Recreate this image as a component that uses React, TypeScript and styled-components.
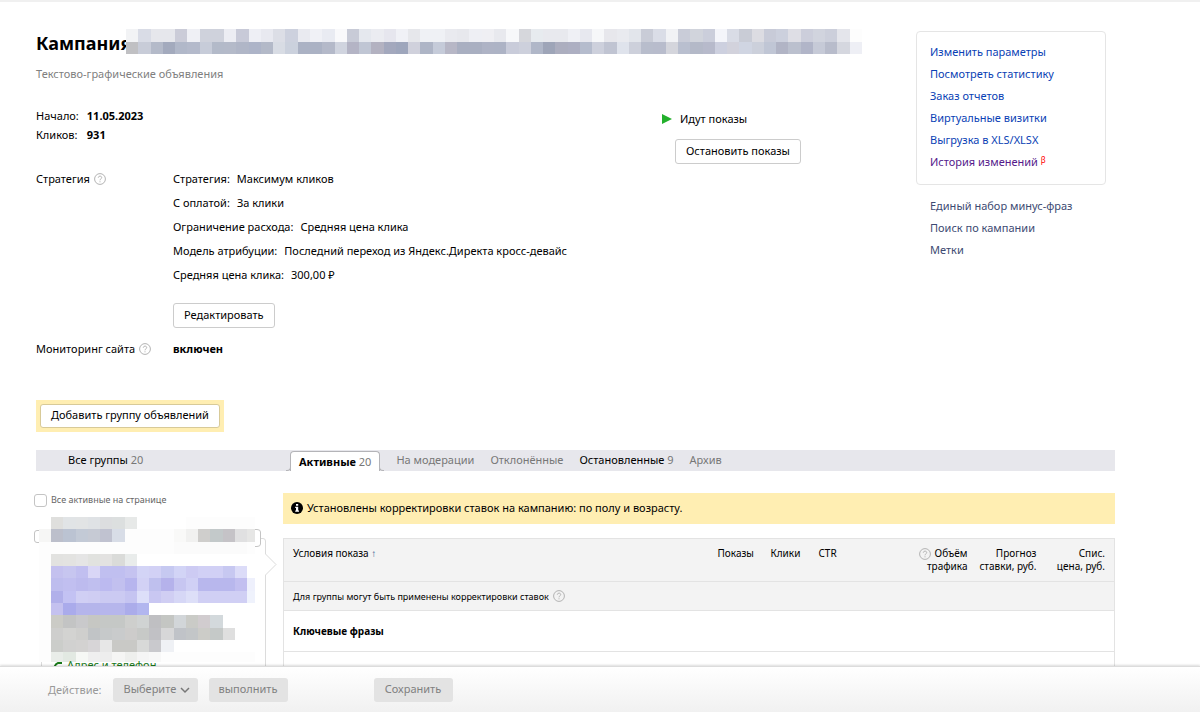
import React from 'react';
import styled, { createGlobalStyle } from 'styled-components';

const GlobalStyle = createGlobalStyle`
  *, *::before, *::after { box-sizing: border-box; }
  body {
    margin: 0;
    background: #fff;
    color: #000;
    font: 11px/18px 'Noto Sans', 'Open Sans', sans-serif;
  }
  button, input, select { font: inherit; }
  a { text-decoration: none; }
  a:hover { text-decoration: underline; }
`;

/* ---------- page frame ---------- */

const Page = styled.div`
  display: flex;
  flex-direction: column;
  height: 100vh;
  border-top: 2px solid #f0f0f0;
`;

const Scroller = styled.main`
  flex: 1;
  min-height: 0;
  overflow-y: auto;
  scrollbar-width: none;
  padding: 27px 85px 0 36px;
`;

const Overview = styled.div`
  display: grid;
  grid-template-columns: 1fr 199px;
`;

/* ---------- heading ---------- */

const TitleRow = styled.div`
  display: flex;
  height: 25px;
`;

const Title = styled.h1`
  flex: none;
  width: 90px;
  margin: 0;
  font-size: 18px;
  line-height: 28px;
  font-weight: 700;
  white-space: nowrap;
`;

const TitleMosaic = styled.svg`
  position: relative;
  display: block;
  flex: none;
  width: 736px;
  height: 25px;
`;

const Subtitle = styled.p`
  margin: 11px 0 0;
  color: #808080;
`;

/* ---------- summary ---------- */

const Facts = styled.div`
  display: flex;
  justify-content: space-between;
  margin-top: 24px;
`;

const FactList = styled.dl`
  display: grid;
  grid-template-columns: auto auto;
  align-content: start;
  gap: 1px 8px;
  margin: 0;
`;

const Term = styled.dt``;

const Value = styled.dd`
  margin: 0;
`;

const StrongValue = styled(Value)`
  font-weight: 700;
`;

const Status = styled.div`
  width: 254px;
  padding-top: 3px;
`;

const StatusLine = styled.div`
  display: flex;
  align-items: center;
  gap: 8px;
  margin-bottom: 11px;
`;

const StatusAction = styled.div`
  padding-left: 13px;
`;

const Button = styled.button`
  height: 25px;
  padding: 0 10px 2px;
  border: 1px solid #ccc;
  border-radius: 3px;
  background: #fff;
  color: #000;
  line-height: 18px;
  white-space: nowrap;
  cursor: pointer;
`;

const Section = styled.section<{ $top: number }>`
  display: grid;
  grid-template-columns: 137px 1fr;
  margin-top: ${p => p.$top}px;
`;

const SectionName = styled.div`
  display: flex;
  align-items: center;
  gap: 4px;
  height: 18px;
`;

const Params = styled.dl`
  display: flex;
  flex-direction: column;
  gap: 6px;
  margin: 0 0 19px;
`;

const Param = styled.div`
  display: flex;
  gap: 7px;
`;

/* ---------- side menu ---------- */

const Side = styled.nav`
  padding-top: 2px;
`;

const Links = styled.ul<{ $boxed?: boolean }>`
  display: flex;
  flex-direction: column;
  gap: 4px;
  width: 190px;
  margin: 0;
  padding: ${p => (p.$boxed ? '11px 13px 13px' : '12px 14px')};
  border: ${p => (p.$boxed ? '1px solid #e5e5e5' : '0')};
  border-radius: 4px;
  list-style: none;
`;

const Link = styled.a<{ $tone: 'blue' | 'visited' | 'slate' }>`
  color: ${p => ({ blue: '#0a3fb5', visited: '#551a8b', slate: '#3d4a72' })[p.$tone]};
`;

const Beta = styled.sup`
  color: #f00;
  font-size: 8px;
  line-height: 0;
  vertical-align: 3px;
`;

/* ---------- groups ---------- */

const AddGroup = styled.div`
  width: max-content;
  margin-top: 42px;
  padding: 4px;
  background: #ffeeb2;
  line-height: 0;
`;

const AddButton = styled(Button)`
  height: 24px;
  border-color: #d8ca98;
`;

const Tabs = styled.div`
  display: flex;
  height: 21px;
  margin-top: 18px;
  padding-left: 32px;
  background: #e7e7ec;
`;

const Tab = styled.button<{ $active?: boolean; $strong?: boolean }>`
  position: relative;
  height: ${p => (p.$active ? 20 : 21)}px;
  margin-top: ${p => (p.$active ? 1 : 0)}px;
  padding: ${p => (p.$active ? '0 8px' : '0 0 2px')};
  border: ${p => (p.$active ? '1px solid #b4b4b8' : '0')};
  border-bottom: 0;
  border-radius: ${p => (p.$active ? '4px 4px 0 0' : '0')};
  background: ${p => (p.$active ? '#fff' : 'none')};
  color: ${p => (p.$active || p.$strong ? '#000' : '#777')};
  font-weight: ${p => (p.$active ? 700 : 400)};
  white-space: nowrap;
  cursor: pointer;

  &::before,
  &::after {
    content: ${p => (p.$active ? "''" : 'none')};
    position: absolute;
    bottom: 0;
    width: 5px;
    height: 5px;
    border-bottom: 1px solid #b4b4b8;
    background: #e7e7ec;
  }
  &::before {
    right: 100%;
    border-right: 1px solid #b4b4b8;
    border-bottom-right-radius: 4px;
  }
  &::after {
    left: 100%;
    border-left: 1px solid #b4b4b8;
    border-bottom-left-radius: 4px;
  }
`;

const AllTab = styled.div`
  display: flex;
  width: 222px;
`;

const TabSet = styled.div`
  display: flex;
  gap: 16px;
`;

const Count = styled.span`
  color: #777;
  font-weight: 400;
`;

const Groups = styled.div`
  display: flex;
  margin-top: 22px;
`;

const GroupColumn = styled.div`
  flex: none;
  width: 249px;
  margin-left: -2px;
`;

const CheckLabel = styled.label`
  display: flex;
  align-items: center;
  gap: 4px;
  height: 14px;
  color: #666;
  font-size: 9px;
`;

const Check = styled.input`
  appearance: none;
  flex: none;
  width: 13px;
  height: 13px;
  margin: 0;
  border: 1px solid #c4c4c4;
  border-radius: 3px;
  background: #fff;
`;

const Preview = styled.div`
  position: relative;
  height: 157px;
  margin-top: 10px;
  padding: 140px 0 0 19px;
`;

const GroupCheck = styled(Check)`
  position: absolute;
  left: 0;
  top: 13px;
`;

const PreviewArt = styled.svg`
  position: absolute;
  left: 0;
  top: 0;
`;

const ContactLink = styled.a`
  position: relative;
  display: flex;
  align-items: center;
  gap: 5px;
  height: 16px;
  color: #1a7a1a;
  line-height: 16px;
`;

const Details = styled.div`
  flex: 1;
  min-width: 0;
`;

const Notice = styled.p`
  display: flex;
  align-items: center;
  gap: 4px;
  height: 31px;
  margin: 0 0 14px;
  padding: 0 8px 2px;
  background: #ffeeb2;
`;

const Table = styled.table`
  width: 100%;
  table-layout: fixed;
  border: 1px solid #e3e3e3;
  border-collapse: collapse;
  font-size: 10px;
  line-height: 13px;
`;

const Th = styled.th<{ $right?: boolean }>`
  height: 43px;
  padding: ${p => (p.$right ? '8px 9px 8px 0' : '8px 9px')};
  background: #f3f3f3;
  font-weight: 400;
  text-align: ${p => (p.$right ? 'right' : 'left')};
  vertical-align: top;
  white-space: nowrap;
`;

const Wide = styled.td<{ $height: number; $shade?: boolean; $strong?: boolean; $small?: boolean }>`
  height: ${p => p.$height}px;
  padding: 0 9px;
  border-top: 1px solid #e3e3e3;
  background: ${p => (p.$shade ? '#f3f3f3' : '#fff')};
  font-size: ${p => (p.$small ? 9 : 10)}px;
  font-weight: ${p => (p.$strong ? 700 : 400)};
`;

const Inline = styled.span`
  display: inline-flex;
  align-items: center;
  gap: 4px;
  height: 13px;
  vertical-align: top;
`;

const SortMark = styled.span`
  color: #33558c;
  font-weight: 700;
`;

/* ---------- action bar ---------- */

const ActionBar = styled.footer`
  position: relative;
  display: flex;
  align-items: center;
  flex: none;
  height: 46px;
  padding: 0 48px;
  border-top: 1px solid #dcdcdc;
  background: linear-gradient(#fff, #f1f1f1);
  box-shadow: 0 -1px 2px rgba(0, 0, 0, 0.14);
`;

const ActionLabel = styled.label`
  margin-right: 11px;
  color: #999;
`;

const SelectBox = styled.span`
  position: relative;
  margin-right: 11px;
`;

const Select = styled.select`
  appearance: none;
  display: block;
  width: 85px;
  height: 24px;
  padding: 0 11px 1px;
  border: 0;
  border-radius: 3px;
  background: #e3e3e3;
  color: #808080;
`;

const Chevron = styled.svg`
  position: absolute;
  right: 8px;
  top: 8px;
  pointer-events: none;
`;

const GreyButton = styled.button<{ $apart?: boolean }>`
  width: 79px;
  height: 24px;
  margin-left: ${p => (p.$apart ? 86 : 0)}px;
  padding: 0 0 1px;
  border: 0;
  border-radius: 3px;
  background: #e3e3e3;
  color: #808080;
`;

/* ---------- drawings ---------- */

function Help() {
  return (
    <svg width="12" height="12" viewBox="0 0 12 12" fill="none" stroke="#b3b3b3" aria-label="Справка">
      <circle cx="6" cy="6" r="5.4" />
      <path d="M4.3 4.7C4.3 2.6 7.7 2.6 7.7 4.6C7.7 5.9 6 5.8 6 7.3M6 8.3V9.3" />
    </svg>
  );
}

function Play() {
  return (
    <svg width="10" height="10" viewBox="0 0 10 10" aria-hidden="true">
      <path d="M0 0L10 5L0 10Z" fill="#23b02c" />
    </svg>
  );
}

function Info() {
  return (
    <svg width="12" height="12" viewBox="0 0 12 12" aria-hidden="true">
      <circle cx="6" cy="6" r="6" />
      <path d="M5 2H7.2V3.8H5ZM4.2 4.8H7.2V8.6H8V9.8H4.2V8.6H5V6H4.2Z" fill="#fff" />
    </svg>
  );
}

function Phone() {
  return (
    <svg width="9" height="9" viewBox="0 0 9 9" fill="none" stroke="#1a7a1a" strokeWidth="2" aria-hidden="true">
      <path d="M9 2H5Q1.500 3 1 9" />
    </svg>
  );
}

const titleTop =
  'f2f3f5 d9dce6 e6e7ec e6e7ec cbccd8 eff0f5 cfd2dc cfd2dc ecedf3 c8cad8 eeeff5 e8e9f0 dcdee6 cdd1de e9eaf0 f0f1f6 e9ebf2 f9f9fb c8cbd7 e5e8ee ebecf1 e6e6ee f0f1f6 e6e7eb eff1f5 eff1f5 e9eaef e7e8ed eeeff4 efeff3 e8e9ee f7f8fa d6d7dc e7ebef e8e9ee e8e9ee eff0f5 e7e8ef f6f7f9 e7e7ec e9eaef e2e5eb c9ccd7 dadde7 f1f2f5 c9ccd8 d1d4dc cbcedb f4f5fa d9dce6 c9ccd6 dcdce2 c8cbd8 ccd0dd dedee5 cccedb d1d4de cccfdb e4e5eb fdfdfd';
const titleBottom =
  'c0c0c3 c8ccd8 b4bac9 a3aabd b1b8c9 b4bacb c7ccd9 b3bac9 b4bac9 b0b6c7 adb4c8 b3b9c8 d8dce4 cbd1dd abb2c4 abb2c4 b4b9c9 d0d4df b4b4c5 c0c6d4 b3b2c1 a3a8bd 9ea6bc d0d1dc aeb5c6 c5cbd9 b7b7c6 a9afc1 a9afc1 aeb3c5 adb3c5 c9ccda cdd0dc b0b7c8 9ea5b8 acaebf adafc2 b5bccd cdd0dc c0c4d2 dfe3ec cdd0db b8bdcc b8bccc d4d5dc b9bfcf b4b9c8 b7bacb cdd0df d2d2dc d0d5e2 ccd0db c0c6d5 b1b4c5 bbc0ce b1b5c8 c6cad7 b8bccb d5d7df eeeff5';

const previewRows = [
  '- dfdfdd e1e4e6 e2e4e5 dfe2e5 dcdddf dcdfdf e7e9e8 - - - - fdfdfd fdfdfd fdfdfd fdfdfd fdfdfd fdfdfd',
  'f6f6f5 bcbfcb bbc3d2 c3cad6 c6cad4 c0c2d0 d8dde7 fdfdfd fdfdfd fdfdfd fdfdfd f9f9f8 f1f1f0 cfcecc c3c9ca c5c3c7 e0e0e1 e6e6e5',
  'fdfdfd fdfdfd fdfdfd fdfdfd fdfdfd fdfdfd fdfdfd fdfdfd fdfdfd fdfdfd fdfdfd fbfbfb fbfbfb fbfbfb fbfbfb fbfbfb fbfbfb fdfdfd',
  'fdfdfd e2e2e0 e3e3e1 e5e5e5 e1e2df e3e2e1 dadbd9 e9eceb',
  'fdfdfd c4c1ef c7c6f0 c1bff0 d9d6f6 c0bff0 c0bff0 c5c3f0 d3d4f6 d2d1f5 c6c9f1 d2d4f6 cdcbf3 d1d0f5 d1d0f5 c7c8f1 dcdcf8 -',
  'fdfdfd bebdee c1bff0 bdbbee c0bfef bcbaf0 c2c0ef b7b5ee d2d1f5 bfc0ee b5b2eb c7c6f1 d0d0f5 b8b7ed b8b7ed b8b7ed c2bff0 eef0fc',
  'fdfdfd b1b0ea c3c2f3 d0cff4 cfcdf3 cbcaf2 cbcaf2 c5c4f1 dddff9 c9c7f2 d0cef3 d6d7f6 dddff8 d0cff4 d0cff4 d0cff4 d0cff4 eff2fc',
  'fdfdfd c4c1ef aaabeb b5b5eb b5b5eb b6b6ec b6b6ec abacea b2b6ef',
  'fdfdfd cbcbc6 c3c4c4 c9c9cb c6c7c3 c5c8c6 c5c8c6 cecfcd d0d3d3 bfbfc2 c4c6c3 d2d6d9 cacbc7 d1cccf d3d9dc',
  'fdfdfd cececd d3d3d1 cfcfcd c1c4c6 c6c9ca c9cbcc cdcccb c7c9c7 c1c1c5 d7d7d8 c0c3c8 c3c6c8 ccccc8 c5c9c8 dfdfdf',
  'fdfdfd cbcdca d1d1d0 d3d2d1 d7d5d7 e7e7e7 c9c9c6 c9c9c6 d8d9d8 c9c9cd eff1f5',
  'fdfdfd e9ede9 e2e9e2 f6f8f5 efefef ededed f5f5f4 eeefed f5f5f5 f8f8f8 fdfdfd fdfdfd fdfdfd fdfdfd fdfdfd fdfdfd fdfdfd fdfdfd',
];

function Cells({ rows }: { rows: string[] }) {
  return (
    <g shapeRendering="crispEdges">
      {rows.flatMap((row, y) =>
        row.split(' ').map((c, x) =>
          c === '-' ? null : <rect key={`${x}-${y}`} x={x} y={y} width="1" height="1" fill={`#${c}`} />,
        ),
      )}
    </g>
  );
}

function GroupPreview() {
  return (
    <Preview>
      <GroupCheck type="checkbox" aria-label="Выбрать группу" />
      <PreviewArt width="249" height="157" viewBox="0 0 249 157" fill="none" aria-hidden="true">
        <path d="M220 12.500H223Q226.500 12.500 226.500 15V27Q226.500 29.500 223 29.500H220" stroke="#c4c4c4" />
        <path d="M227 21.500H229Q231.500 21.500 231.500 24V37L242 47.500L231.500 58V157M7.500 145V157" stroke="#dcdcdc" />
        <svg x="5" y="0" width="216" height="145" viewBox="0 0 17.640 11.800" preserveAspectRatio="none">
          <Cells rows={previewRows} />
        </svg>
      </PreviewArt>
      <ContactLink href="#contacts">
        <Phone />
        Адрес и телефон
      </ContactLink>
    </Preview>
  );
}

/* ---------- data ---------- */

const params = [
  ['Стратегия:', 'Максимум кликов'],
  ['С оплатой:', 'За клики'],
  ['Ограничение расхода:', 'Средняя цена клика'],
  ['Модель атрибуции:', 'Последний переход из Яндекс.Директа кросс-девайс'],
  ['Средняя цена клика:', '300,00 ₽'],
];

const actions = [
  'Изменить параметры',
  'Посмотреть статистику',
  'Заказ отчетов',
  'Виртуальные визитки',
  'Выгрузка в XLS/XLSX',
];

const tools = ['Единый набор минус-фраз', 'Поиск по кампании', 'Метки'];

export default function App() {
  return (
    <>
      <GlobalStyle />
      <Page>
        <Scroller>
          <Overview>
            <div>
              <TitleRow>
                <Title>Кампания</Title>
                <TitleMosaic viewBox="0 0 60 2" preserveAspectRatio="none" aria-hidden="true">
                  <Cells rows={[titleTop, titleBottom]} />
                </TitleMosaic>
              </TitleRow>
              <Subtitle>Текстово-графические объявления</Subtitle>

              <Facts>
                <FactList>
                  <Term>Начало:</Term>
                  <StrongValue>11.05.2023</StrongValue>
                  <Term>Кликов:</Term>
                  <StrongValue>931</StrongValue>
                </FactList>
                <Status>
                  <StatusLine>
                    <Play />
                    Идут показы
                  </StatusLine>
                  <StatusAction>
                    <Button type="button">Остановить показы</Button>
                  </StatusAction>
                </Status>
              </Facts>

              <Section $top={6}>
                <SectionName>
                  Стратегия <Help />
                </SectionName>
                <div>
                  <Params>
                    {params.map(([name, value]) => (
                      <Param key={name}>
                        <Term>{name}</Term>
                        <Value>{value}</Value>
                      </Param>
                    ))}
                  </Params>
                  <Button type="button">Редактировать</Button>
                </div>
              </Section>

              <Section $top={12}>
                <SectionName>
                  Мониторинг сайта <Help />
                </SectionName>
                <b>включен</b>
              </Section>
            </div>

            <Side>
              <Links $boxed>
                {actions.map(name => (
                  <li key={name}>
                    <Link href="#action" $tone="blue">{name}</Link>
                  </li>
                ))}
                <li>
                  <Link href="#history" $tone="visited">История изменений</Link> <Beta>β</Beta>
                </li>
              </Links>
              <Links>
                {tools.map(name => (
                  <li key={name}>
                    <Link href="#tool" $tone="slate">{name}</Link>
                  </li>
                ))}
              </Links>
            </Side>
          </Overview>

          <AddGroup>
            <AddButton type="button">Добавить группу объявлений</AddButton>
          </AddGroup>

          <Tabs>
            <AllTab>
              <Tab type="button" $strong>
                Все группы <Count>20</Count>
              </Tab>
            </AllTab>
            <TabSet>
              <Tab type="button" $active>
                Активные <Count>20</Count>
              </Tab>
              <Tab type="button">На модерации</Tab>
              <Tab type="button">Отклонённые</Tab>
              <Tab type="button" $strong>
                Остановленные <Count>9</Count>
              </Tab>
              <Tab type="button">Архив</Tab>
            </TabSet>
          </Tabs>

          <Groups>
            <GroupColumn>
              <CheckLabel>
                <Check type="checkbox" />
                Все активные на странице
              </CheckLabel>
              <GroupPreview />
            </GroupColumn>
            <Details>
              <Notice>
                <Info />
                Установлены корректировки ставок на кампанию: по полу и возрасту.
              </Notice>
              <Table>
                <colgroup>
                  <col />
                  <col width="53" />
                  <col width="48" />
                  <col width="70" />
                  <col width="97" />
                  <col width="69" />
                  <col width="69" />
                </colgroup>
                <thead>
                  <tr>
                    <Th>
                      Условия показа <SortMark>↑</SortMark>
                    </Th>
                    <Th>Показы</Th>
                    <Th>Клики</Th>
                    <Th>CTR</Th>
                    <Th $right>
                      <Inline>
                        <Help /> Объём
                      </Inline>
                      <br />
                      трафика
                    </Th>
                    <Th $right>
                      Прогноз
                      <br />
                      ставки, руб.
                    </Th>
                    <Th $right>
                      Спис.
                      <br />
                      цена, руб.
                    </Th>
                  </tr>
                </thead>
                <tbody>
                  <tr>
                    <Wide colSpan={7} $height={29} $shade $small>
                      <Inline>
                        Для группы могут быть применены корректировки ставок <Help />
                      </Inline>
                    </Wide>
                  </tr>
                  <tr>
                    <Wide colSpan={7} $height={41} $strong>Ключевые фразы</Wide>
                  </tr>
                  <tr>
                    <Wide colSpan={7} $height={36} />
                  </tr>
                </tbody>
              </Table>
            </Details>
          </Groups>
        </Scroller>

        <ActionBar>
          <ActionLabel htmlFor="action">Действие:</ActionLabel>
          <SelectBox>
            <Select id="action" defaultValue="">
              <option value="">Выберите</option>
            </Select>
            <Chevron width="10" height="8" viewBox="0 0 10 8" fill="none" stroke="#777" strokeWidth="1.500" aria-hidden="true">
              <path d="M1 2L5 6L9 2" />
            </Chevron>
          </SelectBox>
          <GreyButton type="button">выполнить</GreyButton>
          <GreyButton type="button" $apart>Сохранить</GreyButton>
        </ActionBar>
      </Page>
    </>
  );
}
